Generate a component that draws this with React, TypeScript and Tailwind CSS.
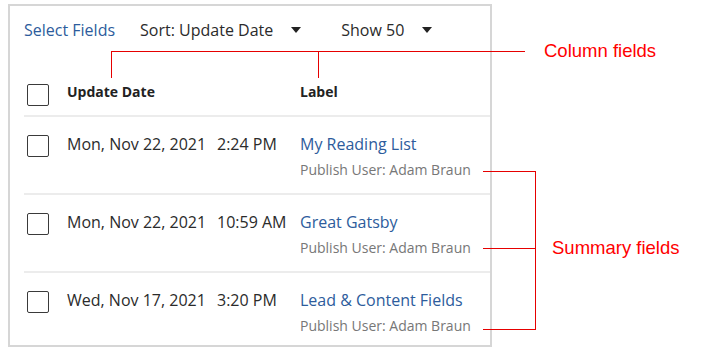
const rows = [
  { date: "Mon, Nov 22, 2021", time: "2:24 PM", label: "My Reading List" },
  { date: "Mon, Nov 22, 2021", time: "10:59 AM", label: "Great Gatsby" },
  { date: "Wed, Nov 17, 2021", time: "3:20 PM", label: "Lead & Content Fields" },
];

function Caret() {
  return (
    <svg width="10" height="6" viewBox="0 0 10 6" className="ml-[18px]">
      <path d="M0 0h10L5 6z" fill="#222" />
    </svg>
  );
}

function Checkbox({ className = "" }: { className?: string }) {
  return (
    <div
      className={`h-[22px] w-[22px] shrink-0 rounded-[2px] border border-[#3a3a3a] bg-white ${className}`}
    />
  );
}

function Red({ className }: { className: string }) {
  return <div className={`absolute bg-[#e60000] ${className}`} />;
}

export default function App() {
  return (
    <div className="relative h-[350px] w-[707px] bg-white font-['Open_Sans','Noto_Sans',sans-serif] text-[#2b2b2b]">
      <div className="ml-[8px] pt-[4px]">
        <div className="flex h-[343px] w-[484px] flex-col border-2 border-[#d6d6d6] pl-[14px]">
          <div className="flex items-center pt-[12px] text-[16px] leading-[24px]">
            <span className="text-[#2d5c9c]">Select Fields</span>
            <span className="ml-[25px]">Sort: Update Date</span>
            <Caret />
            <span className="ml-[40px]">Show 50</span>
            <Caret />
          </div>
          <div className="flex h-[75px] items-start border-b-2 border-[#ececec] pt-[36px]">
            <Checkbox className="ml-[3px] mt-[6px]" />
            <span className="ml-[18px] mt-[4px] w-[233px] text-[14px] font-bold leading-[20px] text-[#222]">
              Update Date
            </span>
            <span className="mt-[4px] text-[14px] font-bold leading-[20px] text-[#222]">Label</span>
          </div>
          {rows.map((r, i) => (
            <div
              key={i}
              className={`flex items-start pt-[17px] ${i < 2 ? "h-[78px] border-b-2 border-[#ececec]" : "flex-1"}`}
            >
              <Checkbox className="ml-[3px] mt-[1px]" />
              <span className="ml-[18px] w-[150px] text-[16px] leading-[20px]">{r.date}</span>
              <span className="w-[83px] text-[16px] leading-[20px]">{r.time}</span>
              <div className="flex flex-col">
                <span className="text-[16px] leading-[20px] text-[#2d5c9c]">{r.label}</span>
                <span className="mt-[6px] text-[14px] leading-[20px] text-[#777]">
                  Publish User: Adam Braun
                </span>
              </div>
            </div>
          ))}
        </div>
      </div>

      {/* annotations */}
      <Red className="left-[111px] top-[51px] h-[1px] w-[414px]" />
      <Red className="left-[111px] top-[51px] h-[27px] w-[1px]" />
      <Red className="left-[318px] top-[51px] h-[27px] w-[1px]" />
      <span className="absolute left-[544px] top-[40px] font-['Liberation_Sans',Arial,sans-serif] text-[18.5px] leading-[22px] text-[#ff0000]">
        Column fields
      </span>
      <Red className="left-[483px] top-[171px] h-[1px] w-[53px]" />
      <Red className="left-[483px] top-[248px] h-[1px] w-[53px]" />
      <Red className="left-[483px] top-[329px] h-[1px] w-[53px]" />
      <Red className="left-[535px] top-[171px] h-[159px] w-[1px]" />
      <span className="absolute left-[552px] top-[237px] font-['Liberation_Sans',Arial,sans-serif] text-[18.5px] leading-[22px] text-[#ff0000]">
        Summary fields
      </span>
    </div>
  );
}
